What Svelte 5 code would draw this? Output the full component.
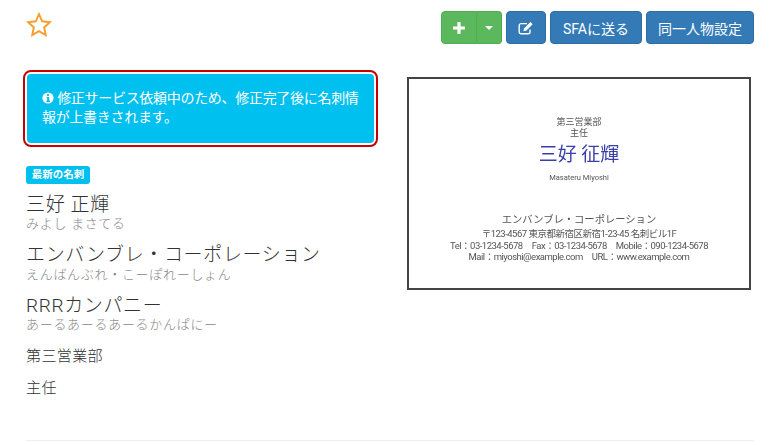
<script>
  const rows = [
    { main: "三好 正輝", kana: "みよし まさてる" },
    { main: "エンバンブレ・コーポレーション", kana: "えんばんぶれ・こーぽれーしょん" },
    { main: "RRRカンパニー", kana: "あーるあーるあーるかんぱにー" },
  ];
</script>

<div class="page">
  <header class="top">
    <svg class="star" viewBox="0 0 26 25" width="26" height="25" aria-hidden="true">
      <path d="M13 2.2l3.2 7.1 7.6.9-5.6 5.2 1.5 7.6L13 19.2l-6.7 3.8 1.5-7.6L2.2 10.2l7.6-.9z" fill="none" stroke="#f5a030" stroke-width="2" stroke-linejoin="miter" />
    </svg>
    <div class="actions">
      <div class="split">
        <button class="btn green plus" aria-label="追加">
          <svg viewBox="0 0 12 12" width="12" height="12"><path d="M4.4 0h3.2v4.4H12v3.2H7.6V12H4.4V7.6H0V4.4h4.4z" fill="#fff" /></svg>
        </button>
        <button class="btn green caret" aria-label="メニュー"><span class="tri"></span></button>
      </div>
      <button class="btn blue edit" aria-label="編集">
        <svg viewBox="0 0 16 14" width="16" height="14">
          <path d="M12 8.4V11a1.8 1.8 0 0 1-1.8 1.8H3A1.8 1.8 0 0 1 1.2 11V4.4A1.8 1.8 0 0 1 3 2.6h6" fill="none" stroke="#fff" stroke-width="1.4" />
          <path d="M6 7.4L12.4.9l2.3 2.3-6.5 6.5-2.8.5z" fill="#fff" />
        </svg>
      </button>
      <button class="btn blue sfa">SFAに送る</button>
      <button class="btn blue same">同一人物設定</button>
    </div>
  </header>

  <main class="columns">
    <section class="info">
      <div class="notice">
        <p>
          <svg class="info-icon" viewBox="0 0 12 12" width="12" height="12">
            <circle cx="6" cy="6" r="5.6" fill="#fff" />
            <path d="M5 2.2h2v1.7H5zM4.6 5h2.6v3.6h.8V10H4.4V8.6h.8V6.3h-.6z" fill="#00c0ef" />
          </svg>
          修正サービス依頼中のため、修正完了後に名刺情報が上書きされます。
        </p>
      </div>

      <div class="label">最新の名刺</div>

      {#each rows as row}
        <div class="row">
          <div class="main">{row.main}</div>
          <div class="kana">{row.kana}</div>
        </div>
      {/each}
      <div class="plain dept">第三営業部</div>
      <div class="plain">主任</div>
    </section>

    <figure class="card">
      <div class="card-inner">
        <div class="c-small">第三営業部</div>
        <div class="c-small">主任</div>
        <div class="c-name">三好 征輝</div>
        <div class="c-roman">Masateru Miyoshi</div>
        <div class="c-company">エンバンブレ・コーポレーション</div>
        <div class="c-line">〒123-4567 東京都新宿区新宿1-23-45 名刺ビル1F</div>
        <div class="c-line">Tel：03-1234-5678　Fax：03-1234-5678　Mobile：090-1234-5678</div>
        <div class="c-line">Mail：miyoshi@example.com　URL：www.example.com</div>
      </div>
    </figure>
  </main>

  <hr />
</div>

<style>
  :global(body) {
    margin: 0;
    background: #fff;
    overflow: hidden;
  }
  .page {
    box-sizing: border-box;
    width: 779px;
    height: 445px;
    padding: 11px 25px 0 26px;
    color: #333;
    font-family: Roboto, "Noto Sans CJK JP", sans-serif;
    font-size: 14px;
  }
  .top {
    display: flex;
    justify-content: space-between;
    align-items: flex-start;
    height: 59px;
  }
  .star {
    margin-top: 1px;
  }
  .actions {
    display: flex;
    gap: 4px;
  }
  .split {
    display: flex;
  }
  .btn {
    box-sizing: border-box;
    height: 33px;
    padding: 0;
    border: 1px solid transparent;
    border-radius: 4px;
    color: #fff;
    font: inherit;
    display: flex;
    align-items: center;
    justify-content: center;
  }
  .blue {
    background: #337ab7;
    border-color: #2e6da4;
  }
  .green {
    background: #5cb85c;
    border-color: #4cae4c;
  }
  .plus {
    width: 36px;
    border-radius: 4px 0 0 4px;
  }
  .caret {
    width: 25px;
    border-left: 0;
    border-radius: 0 4px 4px 0;
  }
  .tri {
    border-top: 4px solid #fff;
    border-left: 4px solid transparent;
    border-right: 4px solid transparent;
  }
  .edit {
    width: 40px;
  }
  .sfa {
    width: 92px;
  }
  .same {
    width: 108px;
  }
  .columns {
    display: flex;
    justify-content: space-between;
    align-items: flex-start;
  }
  .info {
    width: 354px;
  }
  .notice {
    box-sizing: border-box;
    width: 355px;
    height: 77px;
    margin: 0 0 19px -3px;
    padding: 2px;
    border: 2px solid #c40000;
    border-radius: 8px;
  }
  .notice p {
    box-sizing: border-box;
    height: 100%;
    margin: 0;
    padding: 15px 15px;
    background: #00c0ef;
    border-radius: 4px;
    color: #fff;
    line-height: 19px;
    letter-spacing: -0.3px;
  }
  .info-icon {
    vertical-align: -1px;
  }
  .label {
    box-sizing: border-box;
    width: 64px;
    height: 18px;
    margin-bottom: 7.5px;
    line-height: 18px;
    text-align: center;
    background: #00c0ef;
    border-radius: 3px;
    color: #fff;
    font-size: 10.5px;
    font-weight: 700;
  }
  .row {
    margin-bottom: 10px;
  }
  .main {
    font-size: 19px;
    font-weight: 300;
    line-height: 25px;
    letter-spacing: 0.65px;
  }
  .kana {
    margin-top: -1.5px;
    color: #888;
    font-size: 13px;
    font-weight: 300;
    line-height: 17px;
    letter-spacing: 0.7px;
  }
  .plain {
    height: 32px;
    font-size: 15px;
    font-weight: 300;
    line-height: 22px;
    letter-spacing: 0.4px;
  }
  .dept {
    margin-top: 12px;
  }
  hr {
    position: absolute;
    top: 440px;
    left: 26px;
    right: 25px;
    margin: 0;
    border: 0;
    border-top: 1px solid #eee;
  }
  .card {
    box-sizing: border-box;
    width: 344px;
    height: 213px;
    margin: 7px 3px 0 0;
    border: 2px solid #444;
    background: #fff;
  }
  .card-inner {
    filter: blur(0.45px);
    padding-top: 38px;
    text-align: center;
    color: #555;
    white-space: nowrap;
  }
  .c-small {
    font-size: 9px;
    line-height: 11px;
  }
  .c-name {
    margin-top: 3px;
    color: #3a3fa8;
    font-size: 19px;
    line-height: 26px;
  }
  .c-roman {
    margin-top: 4px;
    font-size: 7.5px;
    line-height: 11px;
  }
  .c-company {
    margin-top: 29px;
    font-size: 10.3px;
    line-height: 16px;
  }
  .c-line {
    font-size: 9.5px;
    line-height: 11.5px;
    letter-spacing: -0.5px;
  }
</style>
